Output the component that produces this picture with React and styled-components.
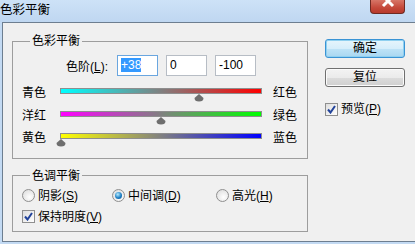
import styled, { createGlobalStyle } from 'styled-components';

const levels = [38, 0, -100];

const sliders = [
  { left: '青色', right: '红色', from: '#00ffff', to: '#ff0000', value: levels[0] },
  { left: '洋红', right: '绿色', from: '#ff00ff', to: '#00ff00', value: levels[1] },
  { left: '黄色', right: '蓝色', from: '#ffff00', to: '#0000ff', value: levels[2] },
];

function fmt(v) {
  return v > 0 ? `+${v}` : `${v}`;
}

function Thumb() {
  return (
    <svg width="11" height="8" viewBox="0 0 11 8">
      <path d="M5.5 0 L10 4 Q10 7.5 5.5 7.5 Q1 7.5 1 4 Z" fill="#6e6e6e" />
    </svg>
  );
}

function CheckMark() {
  return (
    <svg width="9" height="9" viewBox="0 0 9 9">
      <path d="M1 4.5 L3.5 7.5 L8 1" stroke="#22439a" strokeWidth="2" fill="none" />
    </svg>
  );
}

function App() {
  return (
    <>
      <GlobalStyle />
      <Window>
        <TitleBar>
          <Title>色彩平衡</Title>
          <CloseButton>
            <svg width="14" height="10" viewBox="0 0 14 10">
              <path d="M2 -4 L12 6 M12 -4 L2 6" stroke="#fff" strokeWidth="3" />
            </svg>
          </CloseButton>
        </TitleBar>
        <Client>
          <LeftCol>
            <Group $pb={4}>
              <Legend>色彩平衡</Legend>
              <LevelsRow>
                <LevelsLabel>色阶(<U>L</U>):</LevelsLabel>
                {levels.map((v, i) => (
                  <Field key={i} $focused={i === 0}>
                    {i === 0 ? <Selected>{fmt(v)}</Selected> : fmt(v)}
                  </Field>
                ))}
              </LevelsRow>
              <Sliders>
                {sliders.map((s) => (
                  <SliderRow key={s.left}>
                    <SideLabel>{s.left}</SideLabel>
                    <Track $from={s.from} $to={s.to}>
                      <ThumbHolder style={{ left: `${(s.value + 100) / 2}%` }}>
                        <Thumb />
                      </ThumbHolder>
                    </Track>
                    <RightLabel>{s.right}</RightLabel>
                  </SliderRow>
                ))}
              </Sliders>
            </Group>
            <Group $pb={7}>
              <Legend>色调平衡</Legend>
              <RadioRow>
                <Option>
                  <Radio />
                  <span>阴影(<U>S</U>)</span>
                </Option>
                <Option>
                  <Radio $checked />
                  <span>中间调(<U>D</U>)</span>
                </Option>
                <Option>
                  <Radio />
                  <span>高光(<U>H</U>)</span>
                </Option>
              </RadioRow>
              <CheckRow>
                <Option>
                  <Box><CheckMark /></Box>
                  <span>保持明度(<U>V</U>)</span>
                </Option>
              </CheckRow>
            </Group>
          </LeftCol>
          <RightCol>
            <Button $primary>确定</Button>
            <Button>复位</Button>
            <PreviewRow>
              <Option>
                <Box><CheckMark /></Box>
                <span>预览(<U>P</U>)</span>
              </Option>
            </PreviewRow>
          </RightCol>
        </Client>
      </Window>
    </>
  );
}

export default App;

const GlobalStyle = createGlobalStyle`
html, body {
  margin: 0;
  padding: 0;
}
body {
  background: #c4dbf3;
  font-family: "Liberation Sans", "Noto Sans CJK SC", sans-serif;
  font-size: 12px;
  color: #000;
}
`

const Window = styled.div`
width: 415px;
height: 244px;
display: flex;
flex-direction: column;
background: #c3daf3;
overflow: hidden;
`

const TitleBar = styled.div`
height: 22px;
flex: none;
display: flex;
justify-content: space-between;
align-items: flex-start;
background: linear-gradient(#cde2f7, #bfd7f1);
`

const Title = styled.div`
padding-top: 2px;
font-family: "Noto Sans CJK SC", sans-serif;
font-size: 12.5px;
line-height: 13px;
color: #000;
`

const CloseButton = styled.div`
width: 35px;
height: 14px;
margin-right: 10px;
box-sizing: border-box;
border: 1px solid #6e2a22;
border-top: none;
border-radius: 0 0 4px 4px;
background: linear-gradient(#d77567, #c4483a 60%, #b83a2c);
display: flex;
justify-content: center;
align-items: flex-start;
`

const Client = styled.div`
margin-left: 2px;
height: 220px;
box-sizing: border-box;
border: 1px solid #6d7e90;
border-right: none;
background: #f0f0f0;
display: flex;
align-items: flex-start;
padding-left: 9px;
`

const LeftCol = styled.div`
width: 296px;
margin-top: 12px;
display: flex;
flex-direction: column;
gap: 11px;
`

const Group = styled.fieldset`
margin: 0;
padding: 0 0 ${(p) => p.$pb}px;
border: 1px solid #9d9d9d;
min-width: 0;
`

const Legend = styled.legend`
margin-left: 17px;
padding: 0 2px;
font-size: 12px;
line-height: 12px;
`

const LevelsRow = styled.div`
display: flex;
align-items: center;
gap: 8px;
margin-top: 8px;
height: 21px;
`

const LevelsLabel = styled.div`
width: 95px;
margin-right: 1px;
text-align: right;
`

const Field = styled.div`
width: 41px;
height: 21px;
box-sizing: border-box;
border: 1px solid ${(p) => (p.$focused ? '#6aa6df' : '#b7bdc5')};
background: #fff;
padding-left: 3px;
line-height: 19px;
font-size: 12px;
`

const Selected = styled.span`
background: #3399ff;
color: #fff;
`

const U = styled.span`
text-decoration: underline;
`

const Sliders = styled.div`
margin-top: 10px;
padding-left: 9px;
`

const SliderRow = styled.div`
display: flex;
height: 22.5px;
`

const SideLabel = styled.div`
width: 38px;
line-height: 14px;
`

const Track = styled.div`
position: relative;
width: 202px;
height: 6px;
margin-top: 2px;
box-sizing: border-box;
border: 1px solid #8e8e8e;
background: linear-gradient(to right, ${(p) => p.$from}, #808080 50%, ${(p) => p.$to});
`

const ThumbHolder = styled.div`
position: absolute;
top: 5px;
transform: translateX(-50%);
line-height: 0;
`

const RightLabel = styled.div`
margin-left: 11px;
line-height: 14px;
`

const RadioRow = styled.div`
display: grid;
grid-template-columns: 90px 104px auto;
align-items: center;
height: 14px;
margin-top: 7px;
padding-left: 9px;
`

const CheckRow = styled.div`
margin-top: 7px;
padding-left: 9px;
`

const Option = styled.div`
display: flex;
align-items: center;
gap: 3px;
line-height: 14px;
`

const Radio = styled.div`
position: relative;
width: 13px;
height: 13px;
box-sizing: border-box;
border-radius: 50%;
border: 1px solid #8f8f8f;
background: radial-gradient(circle at 60% 65%, #ffffff, #d8d8d8);
&::after {
  content: '';
  display: ${(p) => (p.$checked ? 'block' : 'none')};
  position: absolute;
  left: 2px;
  top: 2px;
  width: 7px;
  height: 7px;
  border-radius: 50%;
  background: radial-gradient(circle at 40% 35%, #b6ecff, #1f7fc4 55%, #0b4f8c);
}
`

const Box = styled.div`
width: 13px;
height: 13px;
box-sizing: border-box;
border: 1px solid #8f8f8f;
background: linear-gradient(135deg, #dedede, #ffffff);
display: flex;
align-items: center;
justify-content: center;
`

const RightCol = styled.div`
width: 80px;
margin-left: 17px;
margin-top: 16px;
display: flex;
flex-direction: column;
gap: 10px;
`

const Button = styled.div`
height: 19px;
box-sizing: border-box;
border: 1px solid ${(p) => (p.$primary ? '#3a93d4' : '#707070')};
border-radius: 3px;
background: ${(p) =>
  p.$primary
    ? 'linear-gradient(#e6f5fc, #d6eefb 50%, #bfe3f7 50%, #a9d7f1)'
    : 'linear-gradient(#f3f3f3, #ebebeb 50%, #dcdcdc 50%, #cfcfcf)'};
box-shadow: inset 0 0 0 1px ${(p) => (p.$primary ? '#8fd0f0' : '#fbfbfb')};
text-align: center;
line-height: 17px;
font-size: 12px;
`

const PreviewRow = styled.div`
margin-top: 5px;
`
